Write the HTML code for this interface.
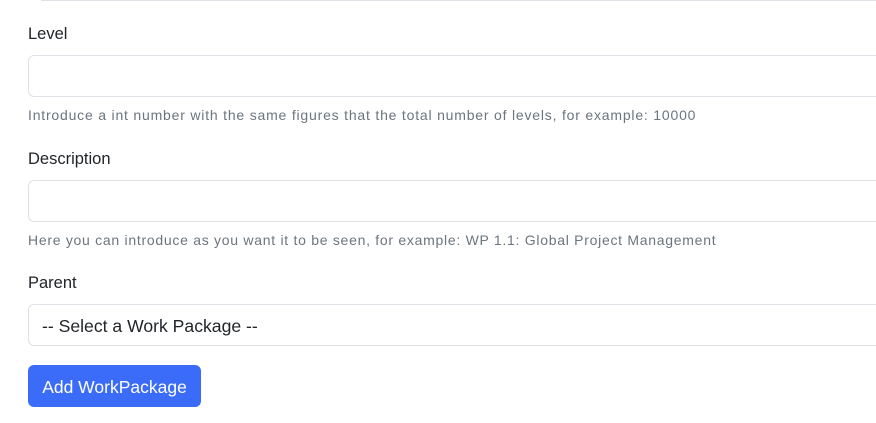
<!DOCTYPE html>
<html><head><meta charset="utf-8"><style>
body{margin:0;width:876px;height:423px;overflow:hidden;background:#fff;font-family:"Segoe UI","Liberation Sans",sans-serif;color:#212529;position:relative}
.a{position:absolute;white-space:nowrap}
.lbl{font-size:16.5px;left:28px}
.help{font-size:14px;left:28px;color:#6c757d;letter-spacing:0.8px}
.inp{position:absolute;left:28px;width:870px;height:40px;border:1px solid #dee2e6;border-radius:6px;background:#fff}
.btn{position:absolute;left:28px;top:365px;width:173px;height:42px;background:#3b6cf9;border-radius:6px;color:#fff;font-size:17.5px;line-height:44px;text-align:center}
</style></head><body>
<div style="position:absolute;left:41px;top:0;width:835px;height:1px;background:#dee2e6"></div>
<div class="a lbl" style="top:25px">Level</div>
<div class="inp" style="top:55px"></div>
<div class="a help" style="top:107px">Introduce a int number with the same figures that the total number of levels, for example: 10000</div>
<div class="a lbl" style="top:150px">Description</div>
<div class="inp" style="top:180px"></div>
<div class="a help" style="top:232px;letter-spacing:0.72px">Here you can introduce as you want it to be seen, for example: WP 1.1: Global Project Management</div>
<div class="a lbl" style="top:274px">Parent</div>
<div class="inp" style="top:304px"></div>
<div class="a" style="left:42px;top:316px;font-size:17.6px">-- Select a Work Package --</div>
<div class="btn">Add WorkPackage</div>
</body></html>
